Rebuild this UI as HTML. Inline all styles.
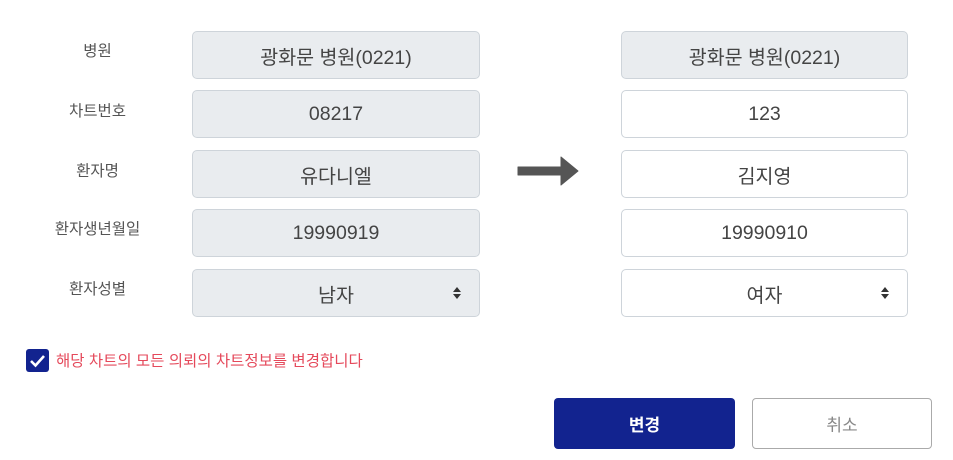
<!DOCTYPE html>
<html><head><meta charset="utf-8"><style>
*{margin:0;padding:0;box-sizing:border-box}
body{width:953px;height:460px;background:#fff;position:relative;overflow:hidden;font-family:"Liberation Sans","Noto Sans CJK KR",sans-serif;color:#444}
.lbl{position:absolute;left:30px;width:135px;text-align:center;font-size:15.5px;color:#555}
.box{position:absolute;height:48px;border:1px solid #ced4da;border-radius:5px;font-size:19.5px;color:#444;display:flex;align-items:center;justify-content:center}
.l{left:192px;width:288px;background:#e9ecef}
.r{left:621px;width:287px;background:#fff}
.arr{position:absolute;right:18px;top:17px;width:8px;height:12px}
.btn{position:absolute;top:398px;height:51px;border-radius:4px;display:flex;align-items:center;justify-content:center;font-size:17px}
</style></head><body>
<div class="lbl" style="top:39px">병원</div>
<div class="lbl" style="top:99px">차트번호</div>
<div class="lbl" style="top:159px">환자명</div>
<div class="lbl" style="top:217px">환자생년월일</div>
<div class="lbl" style="top:277px">환자성별</div>

<div class="box l" style="top:31px">광화문 병원(0221)</div>
<div class="box l" style="top:90px">08217</div>
<div class="box l" style="top:150px">유다니엘</div>
<div class="box l" style="top:209px">19990919</div>
<div class="box l" style="top:269px">남자<svg class="arr" viewBox="0 0 8 12"><path d="M0 5L4 0L8 5Z M0 7L4 12L8 7Z" fill="#333"/></svg></div>

<svg style="position:absolute;left:517px;top:156px" width="62" height="30" viewBox="0 0 62 30"><path d="M1 11H44V1L61 15L44 29V19H1Z" fill="#555" stroke="#555" stroke-linejoin="round"/></svg>

<div class="box r" style="top:31px;background:#e9ecef">광화문 병원(0221)</div>
<div class="box r" style="top:90px">123</div>
<div class="box r" style="top:150px">김지영</div>
<div class="box r" style="top:209px">19990910</div>
<div class="box r" style="top:269px">여자<svg class="arr" viewBox="0 0 8 12"><path d="M0 5L4 0L8 5Z M0 7L4 12L8 7Z" fill="#333"/></svg></div>

<div style="position:absolute;left:26px;top:349px;width:23px;height:23px;background:#12238f;border-radius:3px"><svg width="23" height="23" viewBox="0 0 23 23"><path d="M5 12L9.5 16.5L18 7" fill="none" stroke="#fff" stroke-width="2.6"/></svg></div>
<div style="position:absolute;left:56px;top:349px;font-size:15.5px;color:#e5495b">해당 차트의 모든 의뢰의 차트정보를 변경합니다</div>

<div class="btn" style="left:554px;width:181px;background:#12238f;color:#fff;font-weight:bold">변경</div>
<div class="btn" style="left:752px;width:180px;border:1.5px solid #aaa;color:#888;background:#fff">취소</div>
</body></html>
